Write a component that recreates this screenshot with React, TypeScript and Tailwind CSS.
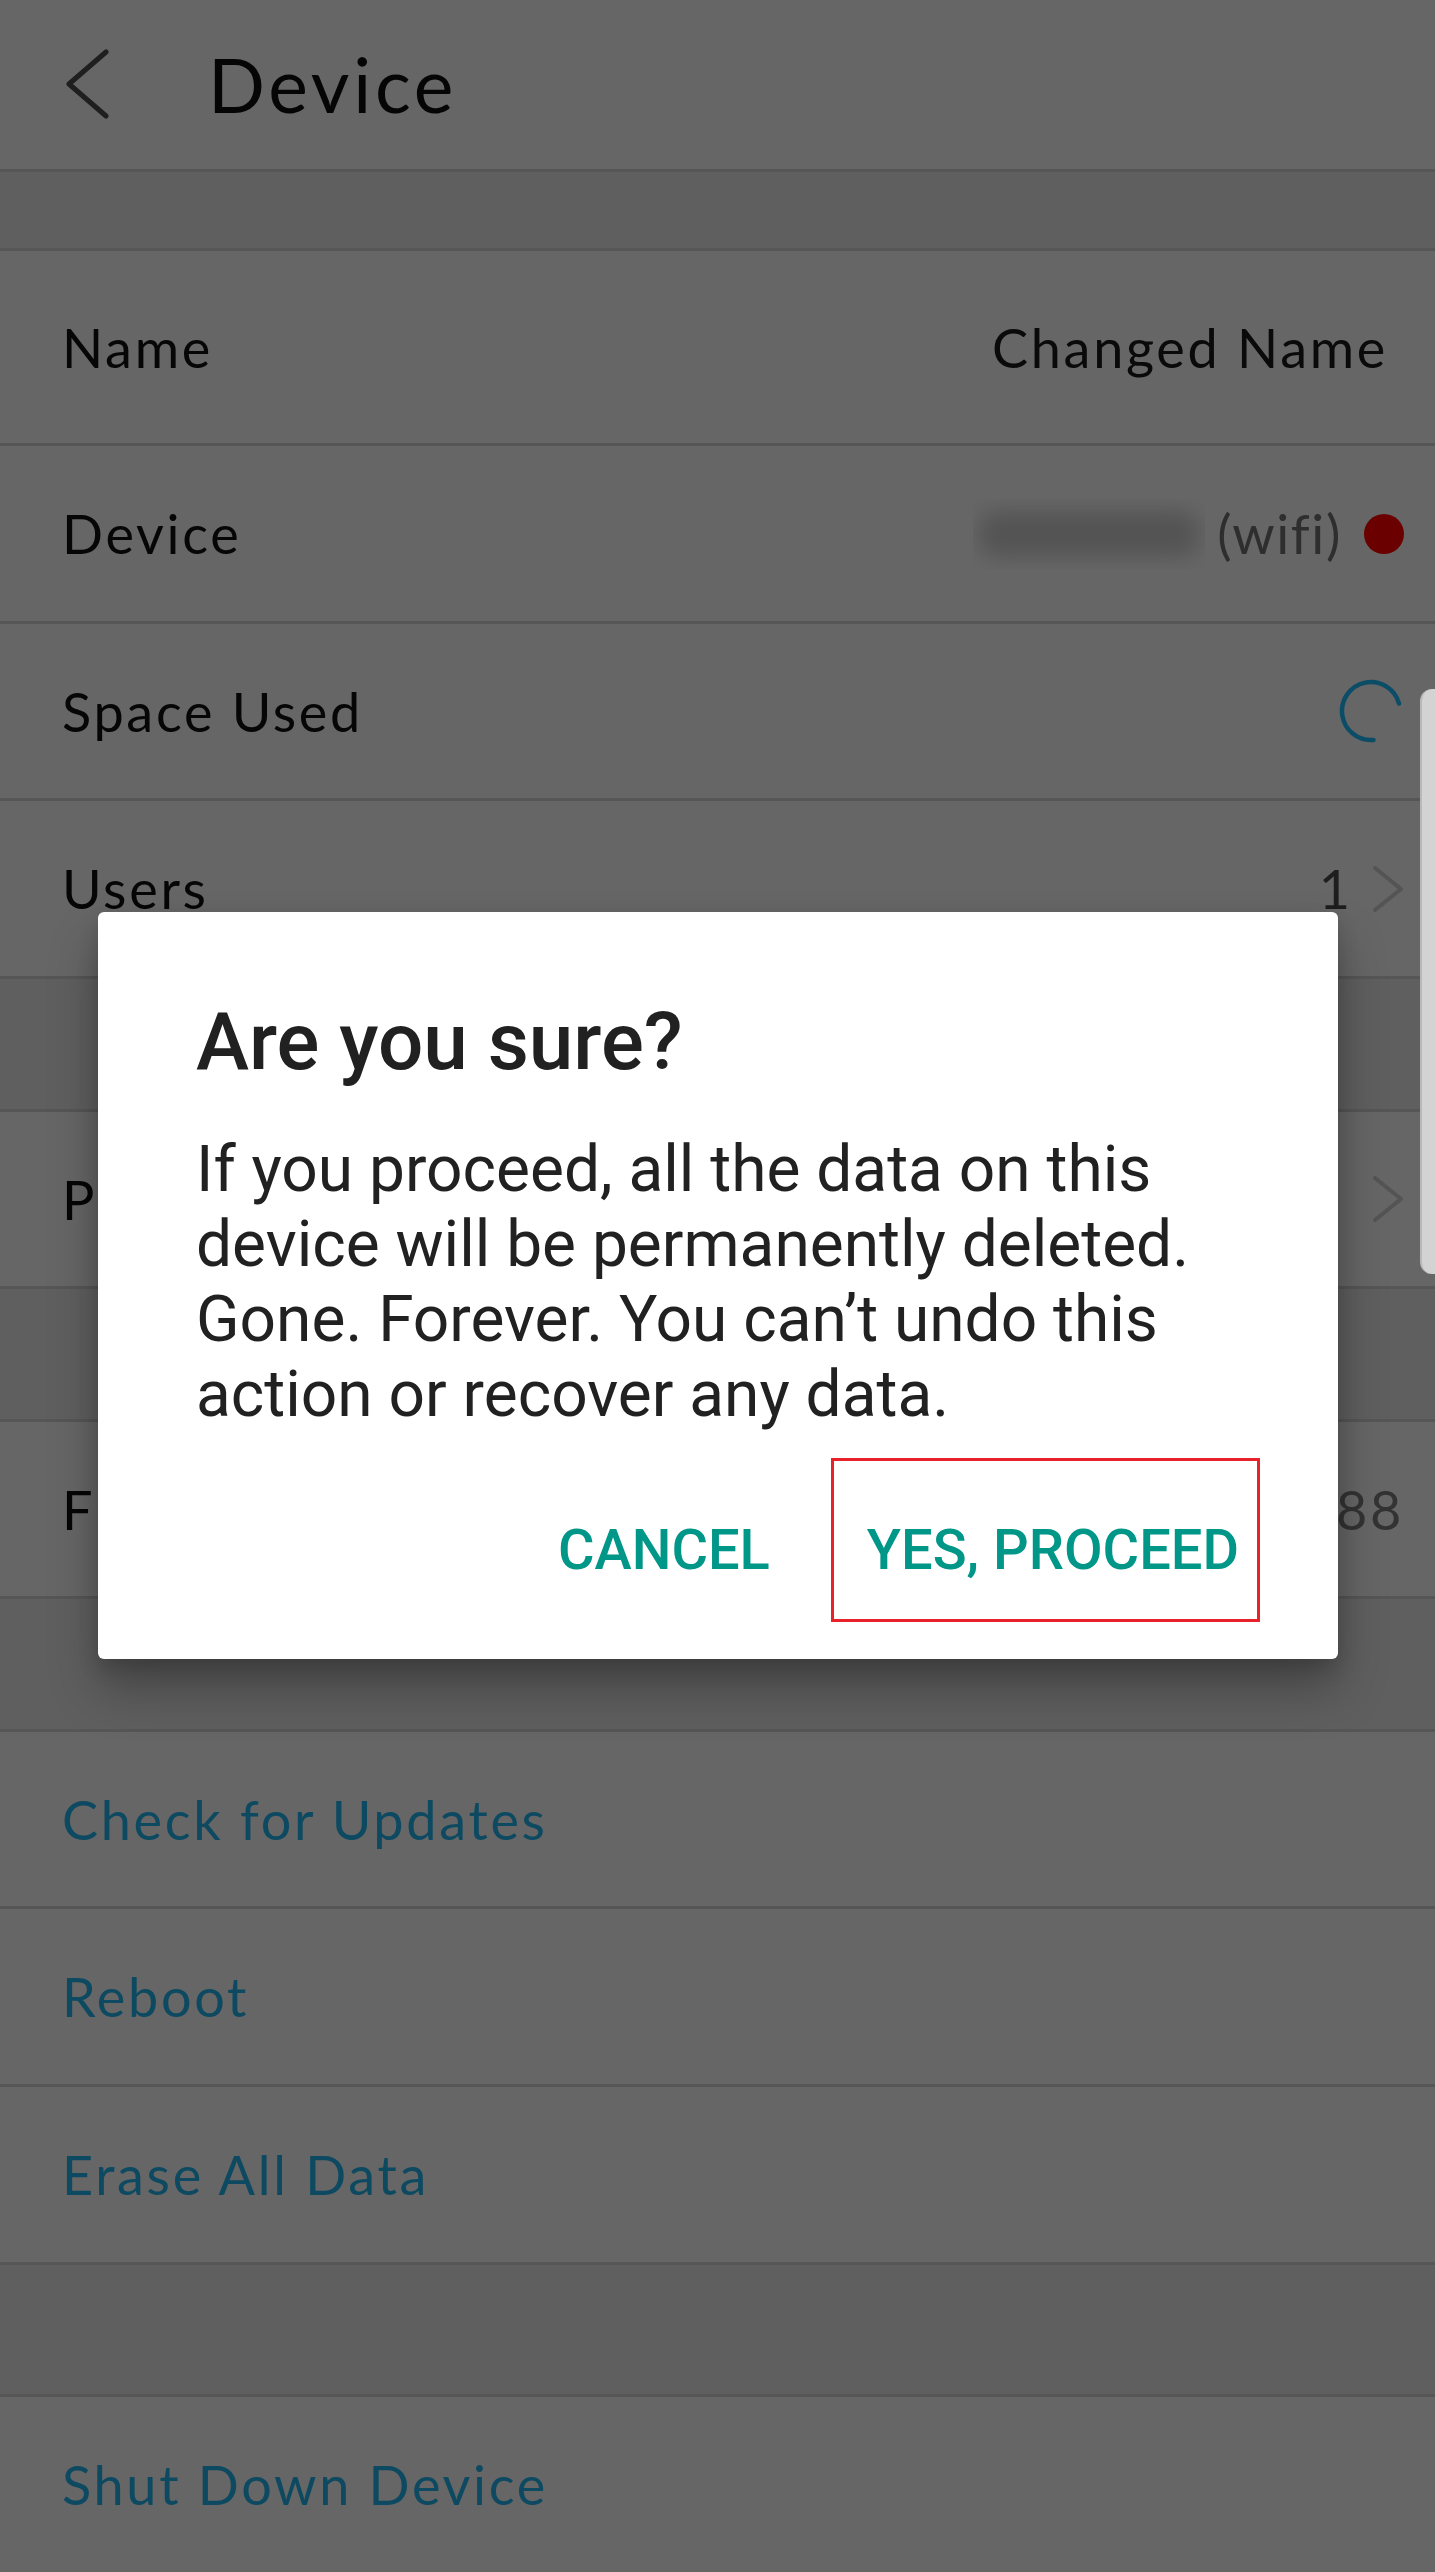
import type { ReactNode } from "react";

const Chevron = ({ gap = "ml-[22px]" }: { gap?: string }) => (
  <svg width="32" height="48" viewBox="0 0 32 48" className={gap}>
    <path d="M3 3 L29 24 L3 45" fill="none" stroke="#545454" strokeWidth="4" strokeLinecap="round" strokeLinejoin="round" />
  </svg>
);

const Spinner = () => (
  <svg width="66" height="66" viewBox="0 0 66 66">
    <path d="M61 25.5 A29 29 0 1 0 35.5 61.9" fill="none" stroke="#0b4d66" strokeWidth="4.5" strokeLinecap="round" />
  </svg>
);

const Row = ({ label, children, h = "h-[178px]", link = false }: { label: string; children?: ReactNode; h?: string; link?: boolean }) => (
  <div className={`flex items-center justify-between ${h} border-b-[3px] border-[#565656] bg-[#666666] pl-[62px] pr-[31px]`}>
    <span className={`text-[54px] tracking-[0.05em] ${link ? "text-[#0d4a61]" : "text-[#060606]"}`}>{label}</span>
    <div className="flex items-center">{children}</div>
  </div>
);

const Gap = ({ h = "h-[133px]" }: { h?: string }) => (
  <div className={`${h} border-b-[3px] border-[#565656] bg-[#5f5f5f]`} />
);

const ConfirmDialog = () => (
  <div className="absolute left-[98px] top-[912px] flex h-[747px] w-[1240px] flex-col rounded-[6px] bg-white pl-[98px] pr-[99px] pt-[83px] font-['Roboto'] text-[#212121] shadow-[0_30px_50px_rgba(0,0,0,0.28),0_10px_20px_rgba(0,0,0,0.15)]">
    <h2 className="text-[80px] font-medium leading-[94px]">Are you sure?</h2>
    <p className="mt-[43px] text-[64px] leading-[75px]">
      If you proceed, all the data on this device will be permanently deleted. Gone. Forever. You can’t undo this action or recover any data.
    </p>
    <div className="mt-[85px] flex justify-end gap-[97px] text-[56px] font-medium leading-[66px] text-[#009688]">
      <button>CANCEL</button>
      <button className="relative">
        YES, PROCEED
        <span className="absolute -left-[36px] -right-[21px] -top-[59px] -bottom-[39px] border-[3px] border-[#e8212b]" />
      </button>
    </div>
  </div>
);

export default function App() {
  return (
    <div className="relative h-[2572px] w-[1435px] overflow-hidden bg-[#666666] font-['Lato',sans-serif]">
      <header className="flex h-[172px] items-center border-b-[3px] border-[#565656] bg-[#666666]">
        <svg width="46" height="72" viewBox="0 0 46 72" className="ml-[64px]">
          <path d="M42 3 L5 35 L42 67" fill="none" stroke="#1f1f1f" strokeWidth="5" strokeLinecap="round" strokeLinejoin="round" />
        </svg>
        <h1 className="ml-[98px] text-[75px] tracking-[0.05em] text-[#050505]">Device</h1>
      </header>
      <Gap h="h-[79px]" />
      <Row label="Name" h="h-[195px]">
        <span className="mr-[16px] text-[54px] tracking-[0.05em] text-[#0a0a0a]">Changed Name</span>
      </Row>
      <Row label="Device">
        <div className="h-[70px] w-[232px] overflow-hidden">
          <div className="mx-[6px] mt-[12px] h-[46px] rounded-[20px] bg-[#545454] blur-[10px]" />
        </div>
        <span className="ml-[12px] text-[54px] tracking-[0.03em] text-[#2e2e2e]">(wifi)</span>
        <span className="ml-[22px] h-[40px] w-[40px] rounded-full bg-[#6b0000]" />
      </Row>
      <Row label="Space Used" h="h-[177px]">
        <Spinner />
      </Row>
      <Row label="Users">
        <span className="text-[54px] text-[#1e1e1e]">1</span>
        <Chevron />
      </Row>
      <Gap />
      <Row label="Ports" h="h-[177px]">
        <Chevron gap="ml-0" />
      </Row>
      <Gap />
      <Row label="Firmware" h="h-[177px]">
        <span className="text-[54px] tracking-[0.05em] text-[#333333]">588</span>
      </Row>
      <Gap />
      <Row label="Check for Updates" h="h-[177px]" link />
      <Row label="Reboot" link />
      <Row label="Erase All Data" link />
      <Gap h="h-[132px]" />
      <Row label="Shut Down Device" link />

      <div className="absolute right-0 top-[689px] h-[585px] w-[15px] rounded-l-[12px] border-l-2 border-[#b9b9b9] bg-[#d3d3d3]" />
      <ConfirmDialog />
    </div>
  );
}
